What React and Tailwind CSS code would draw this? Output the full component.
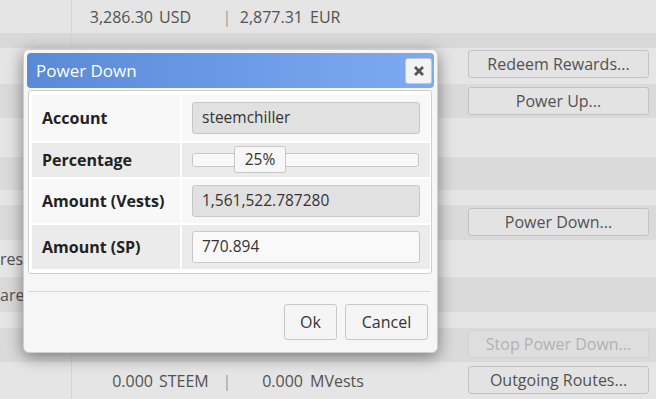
import React from 'react';

const FONT = { fontFamily: '"Open Sans", "Noto Sans", sans-serif' };

// background rows of the wallet page (dimmed behind the dialog)
const ROWS = [
  { h: 'h-[33px]', bg: 'bg-[#e5e5e5]', values: ['3,286.30', 'USD', '2,877.31', 'EUR'] },
  { h: 'h-[15px]', bg: 'bg-[#d8d8d8]' },
  { h: 'h-[36px]', bg: 'bg-[#e5e5e5]', button: 'Redeem Rewards...', pt: 'pt-[2px]' },
  { h: 'h-[34px]', bg: 'bg-[#dadada]', button: 'Power Up...', pt: 'pt-[3px]' },
  { h: 'h-[39px]', bg: 'bg-[#e5e5e5]' },
  { h: 'h-[33px]', bg: 'bg-[#dadada]' },
  { h: 'h-[15px]', bg: 'bg-[#e5e5e5]' },
  { h: 'h-[35px]', bg: 'bg-[#dadada]', button: 'Power Down...', pt: 'pt-[3px]' },
  { h: 'h-[37px]', bg: 'bg-[#e5e5e5]', label: 'res', shift: 'ml-0' },
  { h: 'h-[35px]', bg: 'bg-[#dadada]', label: 'are', shift: 'ml-0' },
  { h: 'h-[16px]', bg: 'bg-[#e5e5e5]' },
  { h: 'h-[34px]', bg: 'bg-[#dadada]', button: 'Stop Power Down...', disabled: true, pt: 'pt-[2px]' },
  { h: 'h-[37px]', bg: 'bg-[#e5e5e5]', values: ['0.000', 'STEEM', '0.000', 'MVests'], button: 'Outgoing Routes...', pt: 'pt-[4px]' },
];

function PageButton({ children, disabled }) {
  return (
    <div
      className={`w-[181px] h-[28px] flex items-center justify-center rounded-[3px] border text-[16px] ${
        disabled ? 'border-[#d2d2d2] bg-[#dedede] text-[#b2b2b2]' : 'border-[#c2c2c2] bg-[#e3e3e3] text-[#525252]'
      }`}
    >
      {children}
    </div>
  );
}

function BackgroundRow({ row }) {
  return (
    <div className={`flex ${row.h} ${row.bg}`}>
      <div className="w-[72px] shrink-0 border-r border-[#d4d4d4] overflow-hidden flex items-center">
        {row.label && <span className={`text-[16px] text-[#525252] whitespace-nowrap ${row.shift}`}>{row.label}</span>}
      </div>
      <div className="flex-1 flex items-center text-[16px] text-[#525252]">
        {row.values && (
          <>
            <span className="w-[81px] text-right">{row.values[0]}</span>
            <span className="ml-[6px] w-[63px]">{row.values[1]}</span>
            <span className="w-[10px] text-center text-[#9a9a9a]">|</span>
            <span className="w-[71px] text-right">{row.values[2]}</span>
            <span className="ml-[7px]">{row.values[3]}</span>
          </>
        )}
      </div>
      <div className={`w-[188px] shrink-0 ${row.pt || ''}`}>
        {row.button && <PageButton disabled={row.disabled}>{row.button}</PageButton>}
      </div>
    </div>
  );
}

function Field({ value, readOnly }) {
  return (
    <div
      className={`ml-[10px] mr-[10px] h-[32px] flex items-center px-[9px] rounded-[3px] border border-[#c8c8c8] text-[15.5px] text-[#333] ${
        readOnly ? 'bg-[#e1e1e1]' : 'bg-[#f9f9f9]'
      }`}
    >
      {value}
    </div>
  );
}

function Slider({ percent }) {
  return (
    <div className="relative ml-[10px] mr-[11px] h-[14px] rounded-[3px] border border-[#c8c8c8] bg-[#f8f8f8]">
      <div className="absolute left-[41px] -top-[8px] w-[52px] h-[27px] rounded-[3px] border border-[#c8c8c8] bg-[#f7f7f7] flex items-center justify-center text-[15.5px] text-[#333]">
        {percent}%
      </div>
    </div>
  );
}

function FormRow({ label, shade, h, children }) {
  const bg = shade ? 'bg-[#ebebeb]' : 'bg-[#f8f8f8]';
  return (
    <div className={`flex gap-[2px] ${h}`}>
      <div className={`w-[148px] shrink-0 flex items-center pl-[10px] ${bg} text-[16px] font-bold text-[#222]`}>{label}</div>
      <div className={`flex-1 flex flex-col justify-center ${bg}`}>{children}</div>
    </div>
  );
}

function PowerDownDialog() {
  return (
    <div className="absolute left-[23px] top-[49px] w-[415px] rounded-[6px] border border-[#cfcfcf] bg-[#f6f6f6] p-[3px] pb-[12px] shadow-[0_4px_16px_rgba(0,0,0,0.45)]">
      {/* title bar */}
      <div className="h-[35px] rounded-[4px] bg-gradient-to-r from-[#5a89d7] to-[#7dabf2] flex items-center justify-between pl-[9px] pr-[2px]">
        <span className="text-[17px] text-white">Power Down</span>
        <div className="w-[27px] h-[26px] rounded-[3px] border border-[#c8c8c8] bg-[#f3f3f3] flex items-center justify-center">
          <svg viewBox="0 0 10 10" className="w-[10px] h-[10px]" fill="none" stroke="#555" strokeWidth="2.8" strokeLinecap="square">
            <path d="M2 2l6 6M8 2l-6 6" />
          </svg>
        </div>
      </div>

      {/* form */}
      <div className="mt-[2px] ml-[1px] mr-[2px] rounded-[3px] border border-[#cfcfcf] bg-white pl-[3px] pr-[1px] py-[4px] flex flex-col gap-[2px]">
        <FormRow label="Account" h="h-[46px]">
          <Field value="steemchiller" readOnly />
        </FormRow>
        <FormRow label="Percentage" shade h="h-[34px]">
          <Slider percent={25} />
        </FormRow>
        <FormRow label="Amount (Vests)" h="h-[44px]">
          <Field value="1,561,522.787280" readOnly />
        </FormRow>
        <FormRow label="Amount (SP)" shade h="h-[44px]">
          <Field value="770.894" />
        </FormRow>
      </div>

      {/* buttons */}
      <div className="mt-[17px] ml-[1px] mr-[4px] border-t border-[#d6d6d6] pt-[12px] flex justify-end gap-[8px] pr-[2px]">
        <button className="w-[53px] h-[36px] rounded-[3px] border border-[#c8c8c8] bg-[#f5f5f5] text-[16px] text-[#333]">Ok</button>
        <button className="w-[83px] h-[36px] rounded-[3px] border border-[#c8c8c8] bg-[#f5f5f5] text-[16px] text-[#333]">Cancel</button>
      </div>
    </div>
  );
}

export default function App() {
  return (
    <div className="relative w-[656px] h-[399px] overflow-hidden bg-[#e5e5e5]" style={FONT}>
      <div className="flex flex-col">
        {ROWS.map((row, i) => (
          <BackgroundRow key={i} row={row} />
        ))}
      </div>
      <PowerDownDialog />
    </div>
  );
}
